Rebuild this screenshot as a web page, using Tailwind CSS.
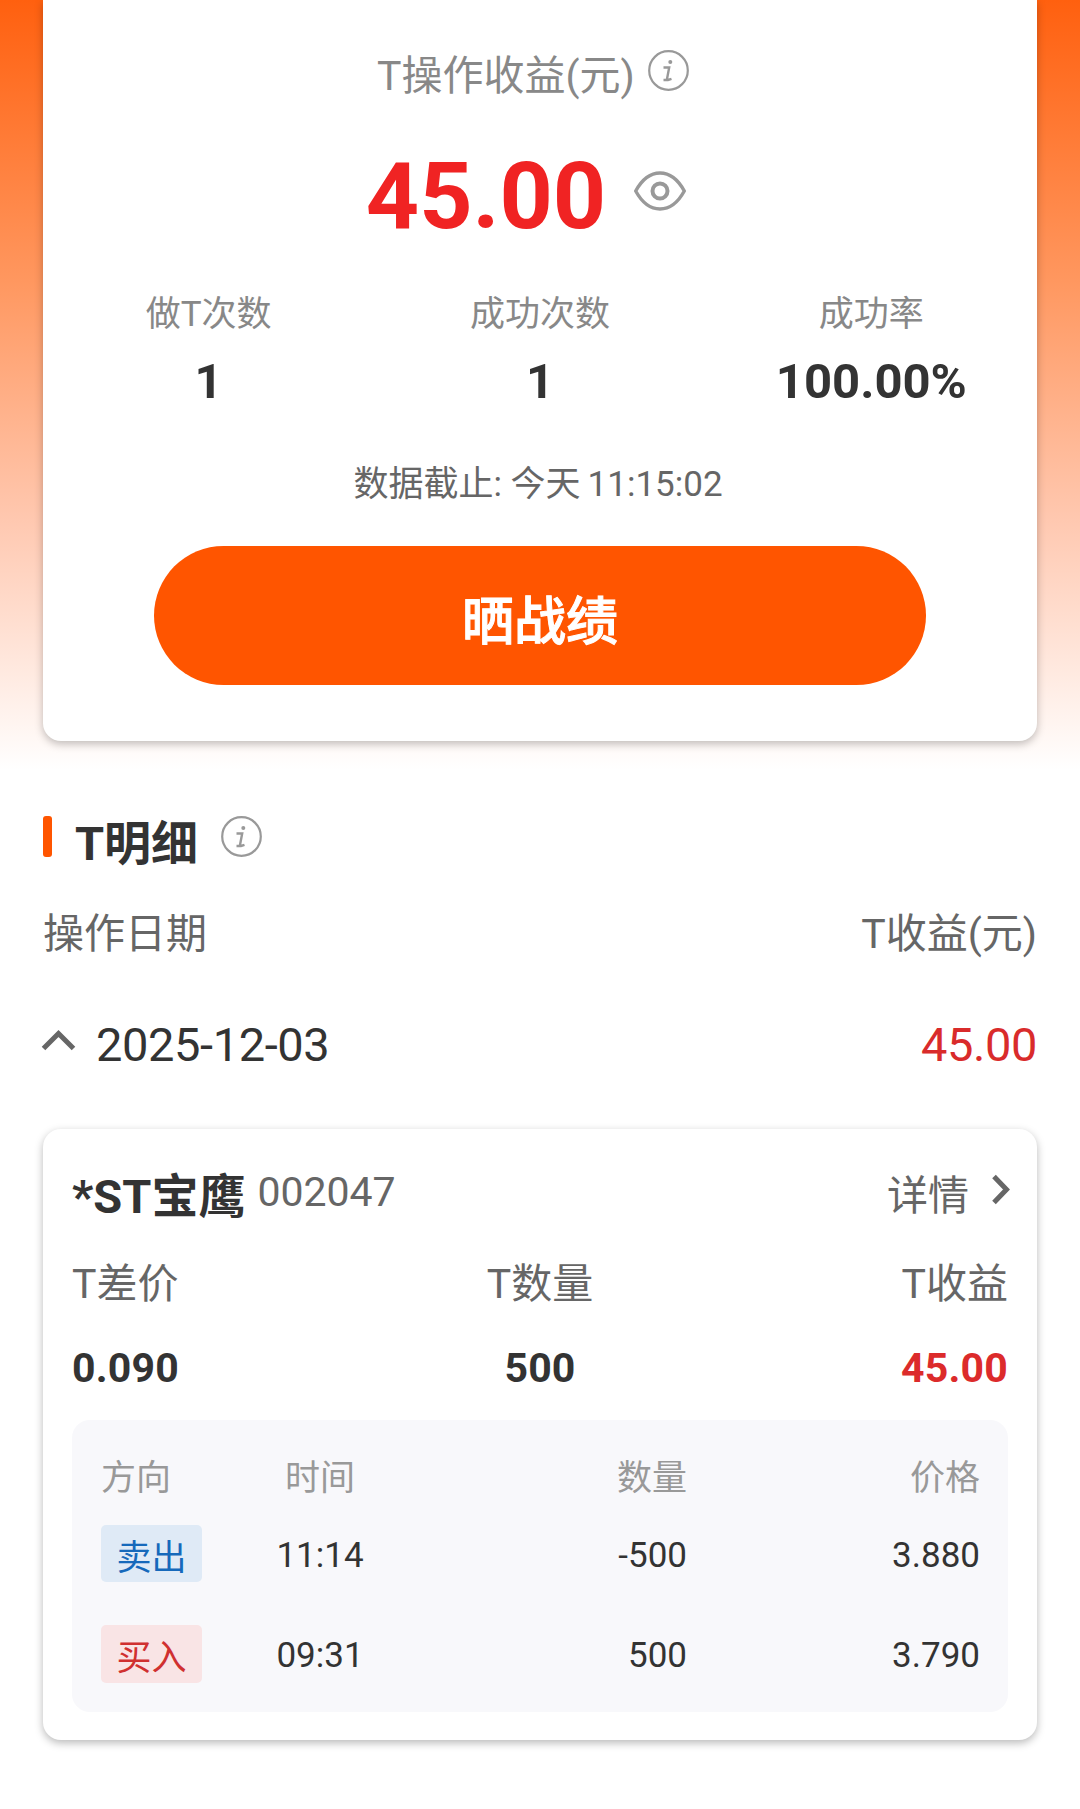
<!DOCTYPE html>
<html lang="zh-CN">
<head>
  <meta charset="UTF-8" />
  <meta name="viewport" content="width=device-width, initial-scale=1.0" />
  <title>T操作收益</title>
  <script src="https://cdn.jsdelivr.net/npm/@tailwindcss/browser@4"></script>
</head>
<body class="bg-white font-['Roboto','Noto_Sans_CJK_SC',sans-serif] text-[#333]">
  <div class="h-[1809px] overflow-hidden bg-[linear-gradient(to_bottom,#ff600f_0px,#ff975f_280px,#ffc8b0_520px,#fff_770px)] px-[43px]">

    <!-- Carte de synthèse -->
    <section class="h-[741px] rounded-b-[18px] bg-white pt-[52px] shadow-[0_3px_8px_rgba(0,0,0,0.25)]">
      <div class="flex h-12 items-center justify-center text-[41px] leading-[48px] text-[#888]">
        <span>T操作收益(元)</span>
        <svg class="mr-[14px] mb-[11px] ml-[13px] h-[41px] w-[41px]" viewBox="0 0 41 41" fill="none" stroke="#999" stroke-width="2.2">
          <circle cx="20.5" cy="20.5" r="19.3" />
          <circle cx="22.3" cy="12" r="2" fill="#999" stroke="none" />
          <path d="M15.500 17.500h5.700l-2.200 11.500M15.500 30h4.500l3.500-1.200" stroke-width="2.400" />
        </svg>
      </div>

      <div class="mt-12 flex h-24 items-center justify-center">
        <span class="pt-px text-[93px] leading-[96px] font-bold text-[#f02323]">45.00</span>
        <svg class="mr-[28px] mb-[10px] ml-[28px] h-[40px] w-[52px]" viewBox="0 0 52 40" fill="none" stroke="#999" stroke-width="3.4">
          <path d="M1.7 20C8 8.5 16 2 26 2s18 6.5 24.300 18C44 31.500 36 38 26 38S8 31.500 1.700 20Z" stroke-linejoin="round" />
          <circle cx="26" cy="20" r="7.500" stroke-width="4" />
        </svg>
      </div>

      <div class="mt-[51px] grid grid-cols-3 text-center">
        <div>
          <p class="text-[35px] leading-10 text-[#888]">做T次数</p>
          <p class="mt-[19px] text-[49px] leading-14 font-bold">1</p>
        </div>
        <div>
          <p class="text-[35px] leading-10 text-[#888]">成功次数</p>
          <p class="mt-[19px] text-[49px] leading-14 font-bold">1</p>
        </div>
        <div>
          <p class="text-[35px] leading-10 text-[#888]">成功率</p>
          <p class="mt-[19px] text-[49px] leading-14 font-bold">100.00%</p>
        </div>
      </div>

      <p class="mt-[55px] pr-1 text-center text-[35px] leading-10 text-[#666]">数据截止: 今天<span class="ml-[7px]">11:15:02</span></p>
      <button class="mx-auto mt-[41px] block h-[139px] w-[772px] rounded-full bg-[#ff5500] pt-[14px] text-[52px] leading-none font-medium text-white [-webkit-text-stroke:1px_white]">晒战绩</button>
    </section>

    <!-- Détail -->
    <div class="mt-[75px] flex h-14 items-start">
      <span class="h-[41px] w-[9px] rounded-[3px] bg-[#ff5500]"></span>
      <h2 class="ml-[23px] text-[47px] leading-14 font-bold">T明细</h2>
      <svg class="ml-[23px] h-[41px] w-[41px]" viewBox="0 0 41 41" fill="none" stroke="#999" stroke-width="2.2">
        <circle cx="20.5" cy="20.5" r="19.3" />
        <circle cx="22.3" cy="12" r="2" fill="#999" stroke="none" />
        <path d="M15.500 17.500h5.700l-2.200 11.500M15.500 30h4.500l3.500-1.200" stroke-width="2.400" />
      </svg>
    </div>

    <div class="mt-[38px] flex justify-between text-[41px] leading-12 text-[#666]">
      <span>操作日期</span>
      <span>T收益(元)</span>
    </div>

    <div class="mt-[59px] flex h-14 items-center text-[47px] leading-14">
      <svg class="-ml-[2px] mr-[20px] mb-[10px] h-[22px] w-[35px]" viewBox="0 0 35 22" fill="none" stroke="#666" stroke-width="5">
        <path d="M2.500 19.500 17.500 4.500 32.500 19.500" />
      </svg>
      <span class="tracking-[-0.4px]">2025-12-03</span>
      <span class="ml-auto tracking-[-0.4px] text-[#d92b2b]">45.00</span>
    </div>

    <section class="mt-14 h-[611px] rounded-[18px] bg-white px-[29px] pt-10 shadow-[0_3px_8px_rgba(0,0,0,0.28)]">
      <div class="flex h-14 items-start">
        <h3 class="text-[47px] leading-14 font-bold">*ST宝鹰</h3>
        <span class="ml-[12px] text-[41px] leading-[47px] text-[#666]">002047</span>
        <span class="ml-auto text-[41px] leading-[55px] text-[#666]">详情</span>
        <svg class="mt-[5px] -mr-[3px] ml-[22px] h-[31px] w-[20px]" viewBox="0 0 20 31" fill="none" stroke="#666" stroke-width="5">
          <path d="M3 2.500 15.500 15.500 3 28.500" />
        </svg>
      </div>

      <div class="mt-[35px] grid grid-cols-3 text-[41px] leading-12 text-[#666]">
        <span>T差价</span>
        <span class="text-center">T数量</span>
        <span class="text-right">T收益</span>
      </div>
      <div class="mt-9 grid grid-cols-3 text-[41px] leading-12 font-bold tracking-[0.2px]">
        <span>0.090</span>
        <span class="text-center">500</span>
        <span class="text-right text-[#dc2b2b]">45.00</span>
      </div>

      <!-- Opérations -->
      <div class="mt-7 h-[292px] rounded-[18px] bg-[#f8f8fb] pr-[28px] pl-[29px] pt-[39px] text-[35px]">
        <div class="grid grid-cols-[101px_236px_249px_1fr] leading-10 text-[#999]">
          <span>方向</span>
          <span class="text-center">时间</span>
          <span class="text-right">数量</span>
          <span class="text-right">价格</span>
        </div>
        <div class="mt-[26px] grid h-[57px] grid-cols-[101px_236px_249px_1fr] leading-[62px]">
          <span class="h-[57px] rounded-[5px] bg-[#dfeaf6] pt-[3px] text-center text-[#1669bb]">卖出</span>
          <span class="text-center">11:14</span>
          <span class="text-right">-500</span>
          <span class="text-right">3.880</span>
        </div>
        <div class="mt-[43px] grid h-[58px] grid-cols-[101px_236px_249px_1fr] leading-[62px]">
          <span class="h-[58px] rounded-[5px] bg-[#f9e4e5] pt-[3px] text-center text-[#d03030]">买入</span>
          <span class="text-center">09:31</span>
          <span class="text-right">500</span>
          <span class="text-right">3.790</span>
        </div>
      </div>
    </section>
  </div>
</body>
</html>
